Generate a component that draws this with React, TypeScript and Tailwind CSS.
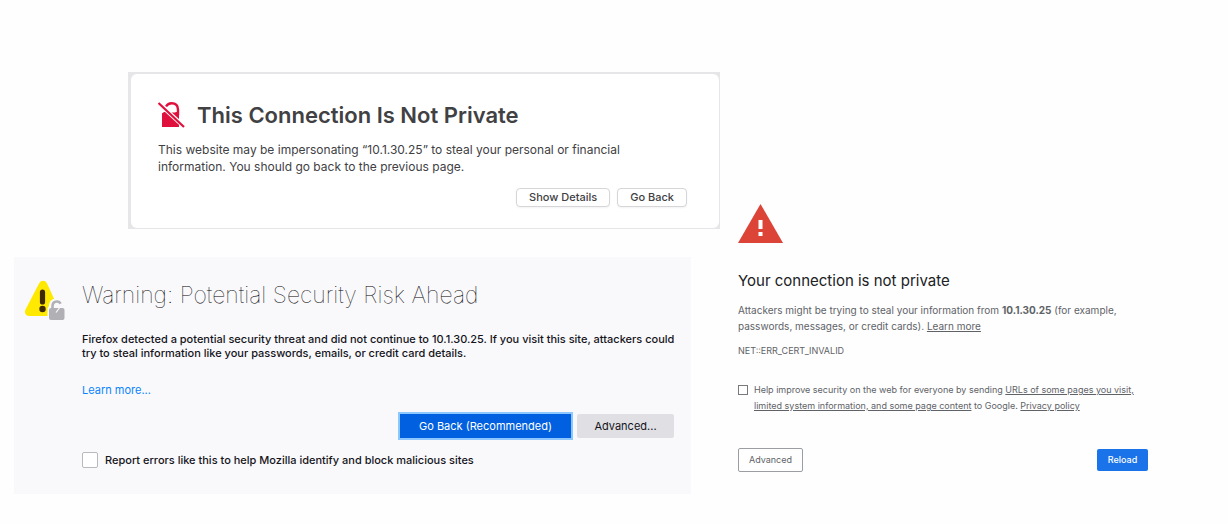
import type { ReactNode } from "react";

function UnlockedSlashIcon() {
  return (
    <svg width="28" height="28" viewBox="0 0 28 28" aria-hidden="true" className="shrink-0">
      <path d="M4 12.500 6 11h13.500l1.500 1.500V26H4z" fill="#e0103c" />
      <path d="M8 5.500C9.500 3 11.500 2.300 13.500 2.300c4 0 6.500 2.500 6.500 6.500V14" fill="none" stroke="#e0103c" strokeWidth="2.400" />
      <path d="M9.500 6h8v5.500h-8z" fill="#ffffff" />
      <path d="M-.5 4 26 28.500 29 25.500 2.500 1z" fill="#ffffff" />
      <path d="M4 12v14h15.200z" fill="#e0103c" />
      <path d="M.5 2 26 26" stroke="#e0103c" strokeWidth="2.200" />
    </svg>
  );
}

function WarningLockIcon() {
  return (
    <svg width="42" height="42" viewBox="0 0 42 42" aria-hidden="true" className="shrink-0">
      <path d="M14.300 4a4.300 4.300 0 0 1 7.500 0l12 26c1.800 3.500 0 7-3.500 7H4C.5 37-1 33.500.5 30.500z" fill="#ffe900" />
      <path d="M17.500 13v10" stroke="#3e2800" strokeWidth="5.200" strokeLinecap="round" />
      <circle cx="17.500" cy="30" r="3.200" fill="#3e2800" />
      <path d="M22.500 42V29l1.500-2c0-4.500 3-7.500 7-7.500s7.500 3 7.500 7.500L42 29v13z" fill="#f9f9fc" />
      <rect x="24" y="29" width="15.500" height="12" rx="2" fill="#b1b1b5" />
      <path d="M27.500 30v-2.500c0-3 1.600-5 4.300-5 1.900 0 3.100.8 3.700 2.200" fill="none" stroke="#b1b1b5" strokeWidth="2.600" />
      <path d="m31 33.500 4.500-6" stroke="#f9f9fc" strokeWidth="1.200" />
    </svg>
  );
}

function DangerIcon() {
  return (
    <svg width="46" height="40" viewBox="0 0 46 40" aria-hidden="true">
      <path d="M22.500 0 45 39H0z" fill="#db4437" />
      <path d="M20.500 16h4v9h-4zM20.500 28h4v4h-4z" fill="#ffffff" />
    </svg>
  );
}

function TextLink({ children }: { children: ReactNode }) {
  return (
    <a href="#" className="underline">
      {children}
    </a>
  );
}

function SafariWarning() {
  return (
    <section className="ml-[114px] border border-t-2 border-l-[3px] border-[#e6e6e8] bg-[#e6e6e8] text-[#414144]">
      <div className="rounded-md bg-white pt-[27px] pr-8 pb-[21px] pl-[27px]">
        <div className="flex items-center gap-[11px]">
          <UnlockedSlashIcon />
          <h1 className="text-[22px] leading-7 font-semibold">This Connection Is Not Private</h1>
        </div>
        <p className="mt-3 text-[12px] leading-[17px]">
          This website may be impersonating “10.1.30.25” to steal your personal or financial
          <br />
          information. You should go back to the previous page.
        </p>
        <div className="mt-[13px] flex justify-end gap-[7px] text-[11px] leading-[17px] font-medium">
          <button className="rounded border border-[#d6d6d8] bg-white px-3 shadow-xs">Show Details</button>
          <button className="rounded border border-[#d6d6d8] bg-white px-3 shadow-xs">Go Back</button>
        </div>
      </div>
    </section>
  );
}

function FirefoxWarning() {
  return (
    <section className="mt-7 mr-[29px] flex gap-[15px] bg-[#f9f9fc] pt-[22px] pr-[9px] pb-[26px] pl-[11px] text-[#15141a]">
      <WarningLockIcon />
      <div className="min-w-0 flex-1">
        <h1 className="text-[23px] leading-8 font-thin text-black">Warning: Potential Security Risk Ahead</h1>
        <p className="mt-[21px] text-[11px] leading-[14px] font-medium">
          Firefox detected a potential security threat and did not continue to 10.1.30.25. If you visit this site, attackers could
          <br />
          try to steal information like your passwords, emails, or credit card details.
        </p>
        <a href="#" className="mt-[23px] block w-fit text-[11px] leading-[14px] text-[#0a84ff]">
          Learn more...
        </a>
        <div className="mt-[17px] mr-2 flex justify-end gap-[6px] text-[11px] leading-6">
          <button className="w-[171px] bg-[#0060df] text-white outline-2 outline-[#8cc8ff]">Go Back (Recommended)</button>
          <button className="w-[97px] rounded-xs bg-[#e0e0e4]">Advanced...</button>
        </div>
        <label className="mt-[14px] flex w-fit items-center gap-[7px] text-[11px] leading-4 font-medium">
          <input type="checkbox" className="size-4 appearance-none rounded-xs border border-[#b8b8bd] bg-white" />
          Report errors like this to help Mozilla identify and block malicious sites
        </label>
      </div>
    </section>
  );
}

function ChromeWarning() {
  return (
    <section className="mt-[132px] text-[10px] text-[#5f6368]">
      <DangerIcon />
      <h1 className="mt-[27px] text-[15px] leading-5 text-[#202124]">Your connection is not private</h1>
      <p className="mt-[11px] leading-4">
        Attackers might be trying to steal your information from <strong>10.1.30.25</strong> (for example,
        <br />
        passwords, messages, or credit cards). <TextLink>Learn more</TextLink>
      </p>
      <p className="mt-[9px] text-[9px] leading-4">NET::ERR_CERT_INVALID</p>
      <div className="mt-[23px] flex gap-[6px] text-[9px] leading-4">
        <input id="help-improve" type="checkbox" className="mt-[3px] size-[10px] shrink-0 appearance-none border border-[#77797d] bg-white" />
        <label htmlFor="help-improve">
          Help improve security on the web for everyone by sending{" "}
          <TextLink>
            URLs of some pages you visit,
            <br />
            limited system information, and some page content
          </TextLink>{" "}
          to Google. <TextLink>Privacy policy</TextLink>
        </label>
      </div>
      <div className="mt-[34px] flex items-center justify-between text-[9px] leading-[22px]">
        <button className="w-[65px] rounded-xs border border-[#9a9da1]">Advanced</button>
        <button className="w-[51px] rounded-xs bg-[#1a73e8] font-medium text-white">Reload</button>
      </div>
    </section>
  );
}

export default function App() {
  return (
    <main className="grid min-h-screen grid-cols-[706fr_410fr] content-start gap-x-[18px] bg-[#fefefe] pt-[72px] pr-20 pb-7 pl-[14px] font-['Inter','Liberation_Sans',sans-serif]">
      <div className="min-w-0">
        <SafariWarning />
        <FirefoxWarning />
      </div>
      <ChromeWarning />
    </main>
  );
}
